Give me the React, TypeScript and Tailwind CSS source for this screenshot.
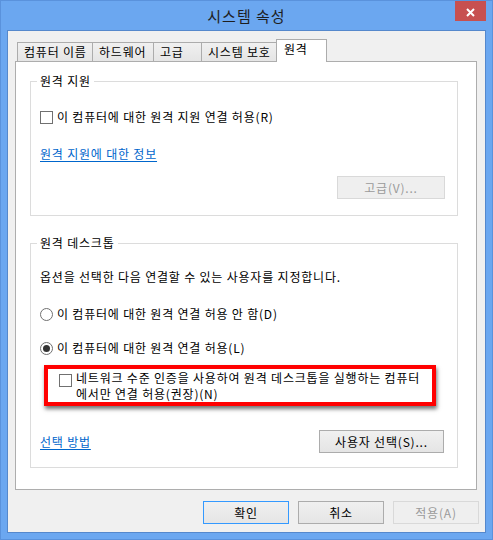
import { JSX } from "react";

const font = "font-['Noto_Sans_CJK_KR','Malgun_Gothic',sans-serif]";

export default function App(): JSX.Element {
    return (
        <div className={`w-[493px] h-[540px] flex flex-col bg-[#6ba7f0] border border-[#5a92dc] text-[12px] leading-[16px] tracking-[0.8px] text-black ${font}`}>
            {/* title bar */}
            <div className="h-[29px] px-[6px] grid grid-cols-[1fr_auto_1fr]">
                <div />
                <div className="self-center text-[15px] leading-[18px] tracking-[1px] text-[#1e1e1e]">시스템 속성</div>
                <div className="justify-self-end">
                    <CloseButton />
                </div>
            </div>

            {/* client area */}
            <div className="mx-[6px] h-[503px] border border-[#5588cc] bg-[#f0f0f0] flex flex-col pt-[8px]">
                <Tabs />

                <div className="ml-[7px] w-[462px] h-[429px] border border-[#adadad] bg-white flex flex-col">
                    <Group title="원격 지원" className="mt-[12px]">
                        <div className="mt-[21px] flex items-center gap-[4px]">
                            <CheckBox />
                            <span>이 컴퓨터에 대한 원격 지원 연결 허용(R)</span>
                        </div>
                        <div className="mt-[21px]">
                            <Link text="원격 지원에 대한 정보" />
                        </div>
                        <div className="mt-[14px] pb-[16px] pr-[3px] flex justify-end">
                            <Button label="고급(V)..." width="w-[108px]" disabled />
                        </div>
                    </Group>

                    <Group title="원격 데스크톱" className="mt-[20px]">
                        <div className="mt-[19px]">옵션을 선택한 다음 연결할 수 있는 사용자를 지정합니다.</div>
                        <div className="mt-[21px] flex items-center gap-[4px]">
                            <Radio />
                            <span>이 컴퓨터에 대한 원격 연결 허용 안 함(D)</span>
                        </div>
                        <div className="mt-[18px] flex items-center gap-[4px]">
                            <Radio checked />
                            <span>이 컴퓨터에 대한 원격 연결 허용(L)</span>
                        </div>
                        <div className="mt-[9px] ml-[4px] w-[392px] h-[41px] border-[4px] border-[#ff0000] shadow-[1px_3px_4px_rgba(0,0,0,0.55)] flex items-start pl-[11px] pt-[1px] gap-[4px]">
                            <span className="mt-[4px]"><CheckBox /></span>
                            <span className="whitespace-nowrap">
                                네트워크 수준 인증을 사용하여 원격 데스크톱을 실행하는 컴퓨터<br />
                                에서만 연결 허용(권장)(N)
                            </span>
                        </div>
                        <div className="mt-[24px] pb-[14px] pr-[4px] flex items-center justify-between">
                            <Link text="선택 방법" />
                            <Button label="사용자 선택(S)..." width="w-[125px]" />
                        </div>
                    </Group>
                </div>

                {/* dialog buttons */}
                <div className="mt-[11px] pr-[6px] flex justify-end gap-[9px]">
                    <Button label="확인" width="w-[86px]" isDefault />
                    <Button label="취소" width="w-[86px]" />
                    <Button label="적용(A)" width="w-[86px]" disabled />
                </div>
            </div>
        </div>
    )
}

function CloseButton(): JSX.Element {
    return (
        <div className="w-[31px] h-[20px] bg-[#c75050] flex items-center justify-center pt-[2px]">
            <svg width="9" height="9" viewBox="0 0 9 9">
                <path d="M1 1 L8 8 M8 1 L1 8" stroke="white" strokeWidth="2" />
            </svg>
        </div>
    )
}

function Tabs(): JSX.Element {
    const tabs = [
        { label: "컴퓨터 이름", w: "w-[76px]" },
        { label: "하드웨어", w: "w-[62px]" },
        { label: "고급", w: "w-[49px]" },
        { label: "시스템 보호", w: "w-[76px]" },
    ];
    return (
        <div className="h-[22px] ml-[9px] flex items-end">
            {tabs.map((t, i) => (
                <div key={i}
                className={`${t.w} h-[19px] ${i > 0 ? "-ml-px" : ""} border border-b-0 border-[#acacac] bg-linear-to-b from-[#f0f0f0] to-[#e5e5e5] pl-[6px] leading-[18px] whitespace-nowrap overflow-hidden`}>
                    {t.label}
                </div>
            ))}
            <div className="relative z-10 -ml-px -mb-px w-[51px] h-[23px] border border-b-0 border-[#acacac] bg-white pl-[7px] pt-[1px] leading-[16px]">
                원격
            </div>
        </div>
    )
}

function Group({title, className, children}: GroupProps): JSX.Element {
    return (
        <fieldset className={`ml-[14px] w-[428px] border border-[#dcdcdc] ${className}`}>
            <legend className="ml-[6px] px-[3px] leading-[14px]">{title}</legend>
            <div className="px-[9px]">
                {children}
            </div>
        </fieldset>
    )
}

function CheckBox(): JSX.Element {
    return <span className="block w-[13px] h-[13px] border border-[#707070] bg-white shrink-0" />
}

function Radio({checked}: {checked?: boolean}): JSX.Element {
    return (
        <span className="w-[13px] h-[13px] rounded-full border border-[#707070] bg-white flex items-center justify-center shrink-0">
            {checked && <span className="w-[7px] h-[7px] rounded-full bg-[#333]" />}
        </span>
    )
}

function Link({text}: {text: string}): JSX.Element {
    return <span className="text-[#0066cc] underline underline-offset-2">{text}</span>
}

function Button({label, width, disabled, isDefault}: ButtonProps): JSX.Element {
    if (disabled) {
        return (
            <div className={`${width} h-[23px] border border-[#d9d9d9] bg-[#efefef] text-[#9a9a9a] flex items-center justify-center`}>
                {label}
            </div>
        )
    }
    return (
        <div className={`${width} h-[23px] border ${isDefault ? "border-[#3399ff]" : "border-[#acacac]"} bg-linear-to-b from-[#f0f0f0] to-[#e5e5e5] flex items-center justify-center`}>
            {label}
        </div>
    )
}

type GroupProps = {
    title: string,
    className?: string,
    children: React.ReactNode
}

type ButtonProps = {
    label: string,
    width: string,
    disabled?: boolean,
    isDefault?: boolean
}
